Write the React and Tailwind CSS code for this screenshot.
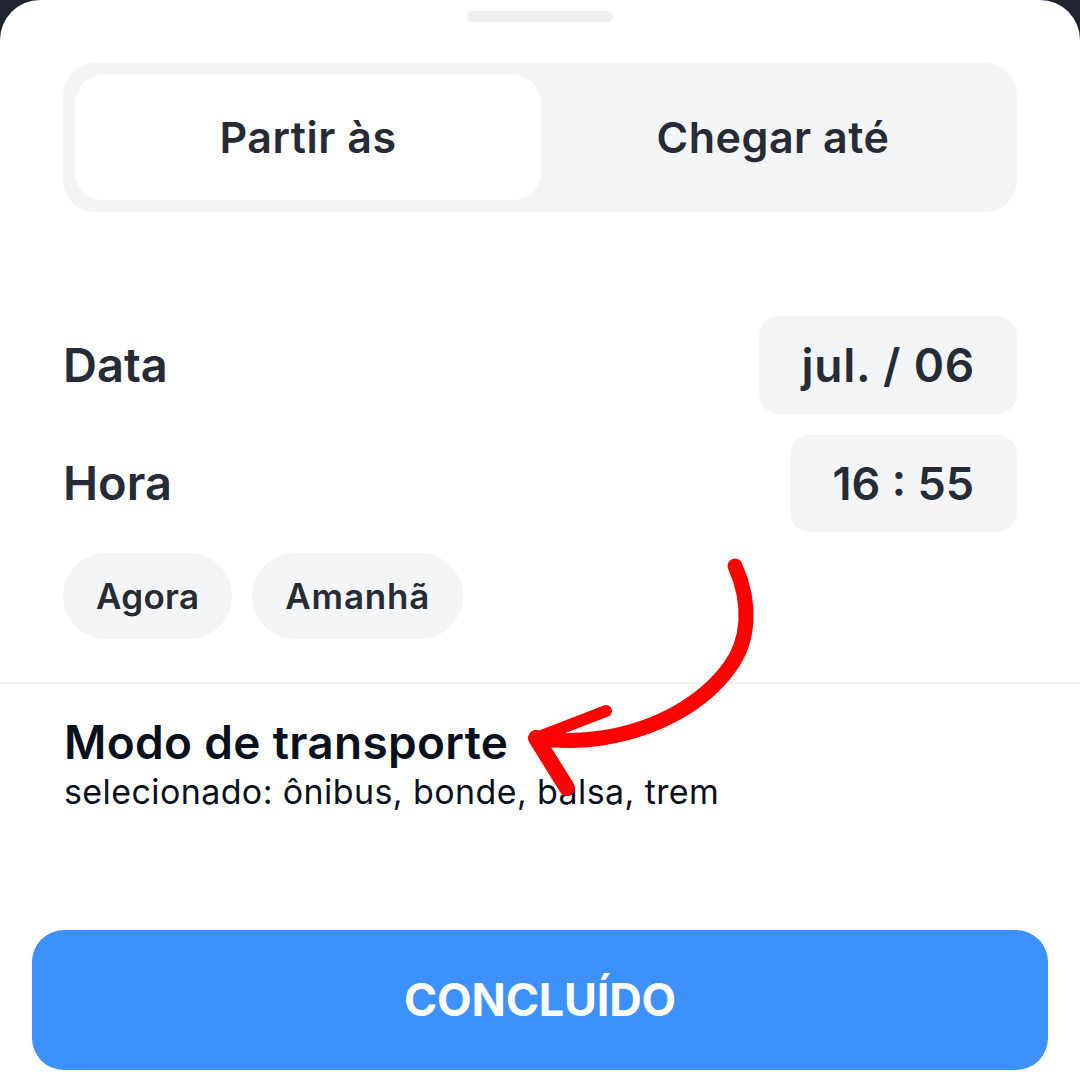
import React from "react";

export default function App() {
  return (
    <div
      className="w-[1080px] h-[1080px] overflow-hidden bg-[#1f2430]"
      style={{ fontFamily: "Inter, 'Noto Sans', sans-serif" }}
    >
      <div className="relative h-[1080px] bg-white rounded-t-[40px] flex flex-col">
        <div className="mt-[11px] mx-auto w-[146px] h-[11px] rounded-full bg-[#efeff0]" />

        <div className="mt-[41px] mx-[63px] h-[149px] rounded-[32px] bg-[#f4f5f6] p-[12px] flex">
          <div className="w-[466px] rounded-[28px] bg-white flex items-center justify-center">
            <span className="text-[43px] font-semibold text-[#262b36] tracking-[0.5px]">Partir às</span>
          </div>
          <div className="flex-1 flex items-center justify-center">
            <span className="text-[43px] font-semibold text-[#262b36] tracking-[0.5px]">Chegar até</span>
          </div>
        </div>

        <div className="mx-[63px] mt-[104px] flex items-center justify-between">
          <span className="text-[47px] font-semibold text-[#262b36]">Data</span>
          <div className="h-[98px] px-[42px] rounded-[20px] bg-[#f4f5f6] flex items-center">
            <span className="text-[46px] font-semibold text-[#262b36] tracking-[0.8px]">jul. / 06</span>
          </div>
        </div>

        <div className="mx-[63px] mt-[21px] flex items-center justify-between">
          <span className="text-[47px] font-semibold text-[#262b36]">Hora</span>
          <div className="h-[97px] px-[43px] rounded-[20px] bg-[#f4f5f6] flex items-center">
            <span className="text-[45px] font-semibold text-[#262b36]">16 : 55</span>
          </div>
        </div>

        <div className="mx-[63px] mt-[21px] flex gap-[20px]">
          <div className="h-[86px] px-[33px] rounded-full bg-[#f4f5f6] flex items-center">
            <span className="text-[35px] font-semibold text-[#262b36] tracking-[0.3px]">Agora</span>
          </div>
          <div className="h-[86px] px-[33px] rounded-full bg-[#f4f5f6] flex items-center">
            <span className="text-[35px] font-semibold text-[#262b36] tracking-[0.8px]">Amanhã</span>
          </div>
        </div>

        <div className="mt-[43px] h-[2px] bg-[#f0f0f1]" />

        <div className="mx-[64px] mt-[31px] flex flex-col">
          <span className="text-[46px] leading-[55px] font-semibold text-[#0b111c] tracking-[0.3px]">
            Modo de transporte
          </span>
          <span className="mt-[2px] text-[34px] leading-[40px] text-[#0b111c] tracking-[0.4px]">
            selecionado: ônibus, bonde, balsa, trem
          </span>
        </div>

        <div className="mx-[32px] mt-[118px] h-[140px] rounded-[32px] bg-[#3d91fd] flex items-center justify-center">
          <span className="text-[45px] font-bold text-white tracking-[-0.2px]">CONCLUÍDO</span>
        </div>

        <svg
          className="absolute left-0 top-0 pointer-events-none"
          width="1080"
          height="1080"
          viewBox="0 0 1080 1080"
          fill="none"
        >
          <path
            d="M735 566 C 752 604, 749 642, 729 668 C 705 701, 660 729, 602 738 C 577 742, 556 741, 536 738"
            stroke="#ff0000"
            strokeWidth="15"
            strokeLinecap="round"
            strokeLinejoin="round"
          />
          <path d="M536 738 L 606 711" stroke="#ff0000" strokeWidth="12" strokeLinecap="round" />
          <path d="M536 738 L 567 788" stroke="#ff0000" strokeWidth="16" strokeLinecap="round" />
        </svg>
      </div>
    </div>
  );
}
